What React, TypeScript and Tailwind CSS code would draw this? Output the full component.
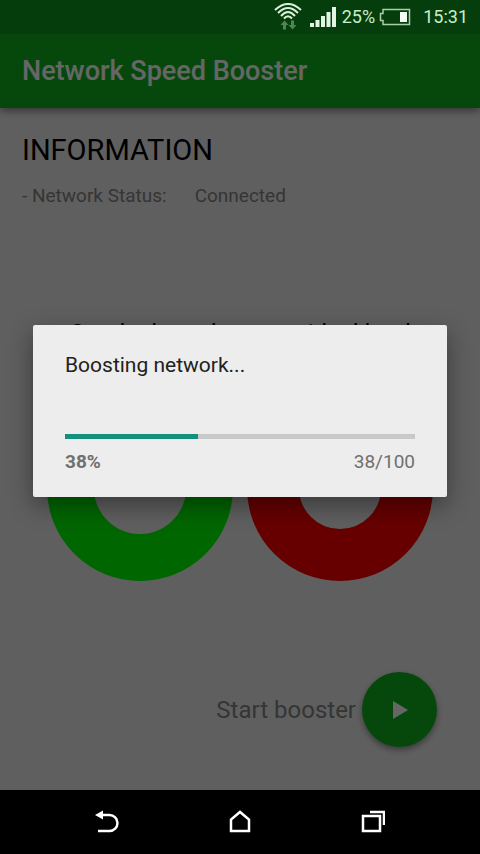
const font = "font-[Roboto,'Noto_Sans',sans-serif]";

interface DonutProps {
  label: string;
  color: string;
  hole: number;
}

function Donut({ label, color, hole }: DonutProps) {
  return (
    <svg viewBox="0 0 186 186" className="w-[186px]" role="img" aria-label={label}>
      <circle cx="93" cy="93" r={(93 + hole) / 2} fill="none" stroke={color} strokeWidth={93 - hole} />
    </svg>
  );
}

function StatusBar() {
  return (
    <div className="relative z-20 flex h-[34px] items-center justify-end bg-[#063d0c] pr-3 text-lg text-[#c9edc9]">
      <svg width="28" height="28" viewBox="0 0 28 28" fill="none" className="mr-2">
        <g stroke="#d8f0d8" strokeWidth="2">
          <path d="M1 7Q14-5 27 7" />
          <path d="M4 10Q14 0 24 10" />
          <path d="M7 13Q14 5 21 13" />
          <path d="M10 15.500Q14 11 18 15.500" />
        </g>
        <path d="M10.500 17.500l4 4.500H12v4.500H9V22H6.500zM18.500 26.500l-4-4.500H17v-4.500h3V22h2.500z" fill="#4f8752" />
      </svg>
      <svg width="26" height="22" viewBox="0 0 26 22" fill="#e2f5e2" className="mr-[6px]">
        <path d="M0 17h4v4H0zM5.500 14h4v7h-4zM11 10h4v11h-4zM16.500 6h4v15h-4zM22 1h4v20h-4z" />
      </svg>
      <span>25%</span>
      <svg width="32" height="18" viewBox="0 0 32 18" fill="none" className="mr-3 ml-1">
        <path d="M4 1.500h26.500v15H4v-4H1.500v-7H4z" stroke="#a9cfa9" strokeWidth="1.500" />
        <path d="M21 4h7v10h-7z" fill="#f2fff2" />
      </svg>
      <span>15:31</span>
    </div>
  );
}

function NavBar() {
  return (
    <nav className="relative z-20 flex h-16 items-center justify-around bg-black px-10 text-white">
      <button aria-label="Back">
        <svg width="24" height="24" viewBox="0 0 24 24" fill="none">
          <path d="M7 5h7.500a8 8 0 0 1 0 16H3" stroke="currentColor" strokeWidth="2.500" />
          <path d="M0 5l8-4.500v9z" fill="currentColor" />
        </svg>
      </button>
      <button aria-label="Home">
        <svg width="24" height="24" viewBox="0 0 24 24" fill="none">
          <path d="M3 21V9.500L12 2l9 7.500V21z" stroke="currentColor" strokeWidth="2.500" />
        </svg>
      </button>
      <button aria-label="Recent apps">
        <svg width="24" height="24" viewBox="0 0 24 24" fill="none" stroke="currentColor" strokeWidth="2.500">
          <path d="M2 6h17v15H2zM9 2h14v13" />
        </svg>
      </button>
    </nav>
  );
}

function ProgressDialog({ value, max }: { value: number; max: number }) {
  const percent = Math.round((value / max) * 100);

  return (
    <div className="absolute inset-0 z-10 flex items-center bg-black/60 px-[33px] pb-8">
      <div
        role="dialog"
        aria-labelledby="dialog-title"
        className="w-full rounded-xs bg-[#ededed] px-8 pt-6 pb-[21px] shadow-[0_8px_24px_rgba(0,0,0,0.4)]"
      >
        <h2 id="dialog-title" className="text-[21px] leading-8 text-[#212121]">
          Boosting network...
        </h2>
        <div
          role="progressbar"
          aria-label="Boosting network"
          aria-valuenow={value}
          aria-valuemax={max}
          className="mt-[53px] h-[5px] bg-[#c9c9c9]"
        >
          <div className="h-full bg-[#15907f]" style={{ width: `${percent}%` }} />
        </div>
        <div className="mt-[9px] flex justify-between text-[19px] leading-7 text-[#707070]">
          <span className="font-bold">{percent}%</span>
          <span>
            {value}/{max}
          </span>
        </div>
      </div>
    </div>
  );
}

export default function App() {
  return (
    <div className={`relative flex min-h-screen flex-col bg-[#eeeeee] ${font}`}>
      <StatusBar />
      <header className="flex h-[74px] items-center bg-[#0fb51e] px-[22px] shadow-[0_3px_8px_rgba(0,0,0,0.45)]">
        <h1 className="text-[27px] font-medium text-white">Network Speed Booster</h1>
      </header>
      <main className="flex flex-1 flex-col">
        <section className="px-[22px] pt-6">
          <h2 className="text-[29px] leading-9 text-black">INFORMATION</h2>
          <p className="mt-3 flex gap-7 text-[19px] leading-8 text-[#858585]">
            <span>- Network Status:</span>
            <span>Connected</span>
          </p>
        </section>
        <section className="mt-[97px] flex flex-col items-center">
          <h2 className="text-2xl leading-[48px] text-black">Graphs based on your ideal load</h2>
          <div className="mt-[38px] flex gap-[14px]">
            <Donut label="Download" color="#00ff00" hole={46} />
            <Donut label="Upload" color="#ff0000" hole={41} />
          </div>
        </section>
        <div className="mt-auto mb-[43px] flex items-center justify-end gap-[6px] pr-[43px]">
          <label htmlFor="start" className="text-2xl text-[#858585]">
            Start booster
          </label>
          <button
            id="start"
            className="flex size-[75px] items-center justify-center rounded-full bg-[#0fb51e] shadow-[0_3px_6px_rgba(0,0,0,0.4)]"
          >
            <svg width="16" height="18" viewBox="0 0 16 18" fill="#ffffff">
              <path d="M1 0l15 9-15 9z" />
            </svg>
          </button>
        </div>
      </main>
      <ProgressDialog value={38} max={100} />
      <NavBar />
    </div>
  );
}
